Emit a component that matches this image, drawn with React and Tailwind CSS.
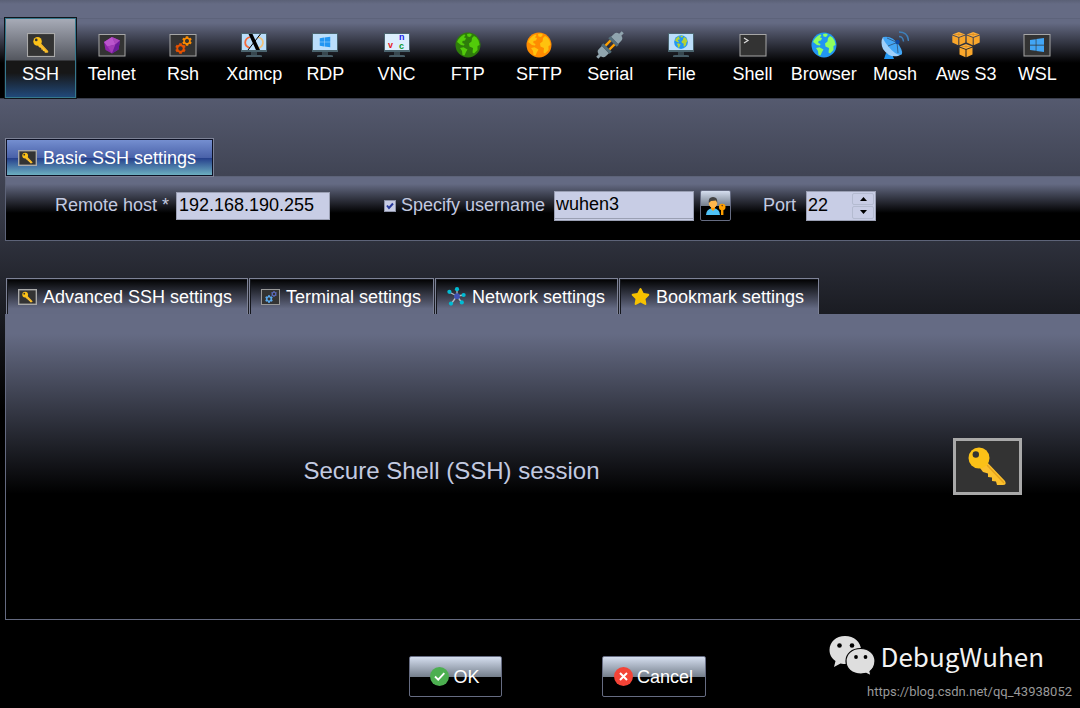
import React, { useState } from "react";
import { FaCog, FaStar, FaWindows } from "react-icons/fa";

const KeyShape = () => (
  <g>
    <path d="M33 23 L52 43 Q54 47 50 47 L44 47 L43 43.5 L39 43 L39 39.5 L35 39 L35 35.5 L30 34 L27 30 Z" fill="#fbc02d" />
    <path d="M34 27 L51 45" stroke="#e6a31c" strokeWidth="1.5" />
    <circle cx="26" cy="20" r="10.5" fill="#fbc117" />
    <circle cx="22.8" cy="16.5" r="3.2" fill="#333" />
  </g>
);

const KeyIcon = ({ className, thick = 5 }) => (
  <svg className={className} viewBox="0 0 69 57" preserveAspectRatio="none" aria-hidden="true">
    <rect x={thick / 2} y={thick / 2} width={69 - thick} height={57 - thick} fill="#333" stroke="#a9a9a9" strokeWidth={thick} />
    <KeyShape />
  </svg>
);

const Icon = ({ children }) => (
  <svg className="h-7 w-7" viewBox="0 0 28 28" aria-hidden="true">
    {children}
  </svg>
);

const Frame = () => <rect x="1" y="3.5" width="26" height="21.5" fill="#333" stroke="#a6a6a6" />;

const Monitor = ({ fill = "#bbdefb" }) => (
  <g>
    <rect x="11" y="20" width="6" height="4" fill="#37474f" />
    <path d="M6 26 V25 Q6 24 8 24 H20 Q22 24 22 25 V26 Z" fill="#455a64" />
    <rect x="1" y="2" width="26" height="19" fill="#4b646e" />
    <rect x="2" y="3" width="24" height="16" fill={fill} />
  </g>
);

const Globe = ({ sea, land }) => (
  <g>
    <circle cx="14" cy="14" r="12.5" fill={sea} />
    <path
      d="M3 11 Q5 6 10 3.4 L11.5 4 L10 6.5 L12 7 L11 9.5 L8.5 10 L8.3 12 L10.5 13 L10 14.5 L7 14 L4.5 12 Z
         M13 3 L16 2.4 L18 3.8 L16 6 L13.5 5.5 Z
         M18 7 L20 5 L22.5 6.5 L24.5 9.5 L25.6 14 L23.5 15 L23.5 19 L20 22.5 L18.5 21.5 L19 17 L15.5 15.5 L15 12.5 L17.5 10.5 Z
         M6 17 L9.5 16.2 L13.5 18.5 L12 21 L10.5 24.5 L8.5 24 L8 20 Z"
      fill={land}
    />
  </g>
);

const Gear = ({ x, y, size, color }) => <FaCog x={x} y={y} size={size} color={color} />;

const Cube = ({ x, y }) => (
  <g transform={`translate(${x} ${y})`}>
    <path d="M6.5 0 L13 2.5 L6.5 5 L0 2.5 Z" fill="#fbb040" />
    <path d="M0 3.5 L6 5.8 V13.2 L0 10.5 Z" fill="#f9a62b" />
    <path d="M13 3.5 L7 5.8 V13.2 L13 10.5 Z" fill="#f9a62b" />
    <path d="M2 2.5 H11 M6.5 0.6 V4.4" stroke="#e08e1d" strokeWidth="0.8" />
  </g>
);

const sessions = [
  { name: "SSH", icon: <KeyIcon className="my-[2px] h-6 w-7" thick={2.6} /> },
  {
    name: "Telnet",
    icon: (
      <Icon>
        <Frame />
        <path d="M14 6 L22 9.5 L20.5 18.5 L14 22.5 L7.5 19 L6 11 Z" fill="#8e24aa" />
        <path d="M14 6 L17.5 13.5 L22 9.5 Z" fill="#ab47bc" />
        <path d="M14 6 L6 11 L9.5 15.5 L17.5 13.5 Z" fill="#ba55cc" />
        <path d="M9.5 15.5 L17.5 13.5 L14 22.5 Z" fill="#a13bb5" />
        <path d="M17.5 13.5 L22 9.5 L20.5 18.5 L14 22.5 Z" fill="#6a1b9a" />
      </Icon>
    ),
  },
  {
    name: "Rsh",
    icon: (
      <Icon>
        <Frame />
        <Gear x={6} y={12} size={11} color="#e65100" />
        <Gear x={13} y={5} size={10} color="#fb8c00" />
        <circle cx="11.5" cy="17.5" r="2.2" fill="#333" />
        <circle cx="18" cy="10" r="2" fill="#333" />
      </Icon>
    ),
  },
  {
    name: "Xdmcp",
    icon: (
      <Icon>
        <Monitor />
        <path d="M10 17 A8 6 0 0 1 10 6" fill="none" stroke="#f4693a" strokeWidth="1.8" />
        <path d="M18 6 A8 6 0 0 1 16 17.5" fill="none" stroke="#f0c27b" strokeWidth="1.8" />
        <path d="M20.5 3 L8 19" stroke="#000" strokeWidth="1" />
        <path d="M8.5 3 H12.5 L20 19 H16 Z" fill="#000" />
      </Icon>
    ),
  },
  {
    name: "RDP",
    icon: (
      <Icon>
        <Monitor />
        <FaWindows x={8} y={5} size={12} color="#2196f3" />
      </Icon>
    ),
  },
  {
    name: "VNC",
    icon: (
      <Icon>
        <Monitor fill="#dceefd" />
        <g fontFamily="Liberation Sans, sans-serif" fontWeight="bold" fontSize="9">
          <text x="5" y="17" fill="#e51c23">v</text>
          <text x="16" y="9" fill="#1a1ae6">n</text>
          <text x="16" y="18" fill="#0a9a2c">c</text>
        </g>
      </Icon>
    ),
  },
  { name: "FTP", icon: <Icon><Globe sea="#2e7d0a" land="#52cc0a" /></Icon> },
  { name: "SFTP", icon: <Icon><Globe sea="#ff8c00" land="#ffc20e" /></Icon> },
  {
    name: "Serial",
    icon: (
      <Icon>
        <g transform="translate(14 14) rotate(45)">
          <rect x="-4" y="-5" width="2.4" height="10" fill="#ffa000" />
          <rect x="1.6" y="-5" width="2.4" height="10" fill="#ffa000" />
          <rect x="-6" y="-6.5" width="12" height="3" fill="#546e7a" />
          <path d="M-5 -6.5 V-11 Q-5 -14 -1.5 -14.5 V-18 H1.5 V-14.5 Q5 -14 5 -11 V-6.5 Z" fill="#90a4ae" />
          <rect x="-6" y="3.5" width="12" height="3" fill="#546e7a" />
          <path d="M-5 6.5 V11 Q-5 14 -1.5 14.5 V18 H1.5 V14.5 Q5 14 5 11 V6.5 Z" fill="#90a4ae" />
        </g>
      </Icon>
    ),
  },
  {
    name: "File",
    icon: (
      <Icon>
        <Monitor />
        <g transform="translate(6.3 3.3) scale(0.55)">
          <Globe sea="#2196f3" land="#b5d334" />
        </g>
      </Icon>
    ),
  },
  {
    name: "Shell",
    icon: (
      <Icon>
        <Frame />
        <path d="M5 7 L9 9.5 L5 12" fill="none" stroke="#ddd" strokeWidth="1.2" />
      </Icon>
    ),
  },
  { name: "Browser", icon: <Icon><Globe sea="#2196f3" land="#8fff60" /></Icon> },
  {
    name: "Mosh",
    icon: (
      <Icon>
        <path d="M5 22 L11 23 L13 28 H3 Z" fill="#2196f3" />
        <path d="M2 6 Q11 9 18 20 Q21 24 17 25 Q8 27 2 18 Q-1 11 2 6 Z" fill="#9fd0fb" />
        <path d="M2 6 Q11 4 18 14 Q23 22 20 24 Q14 24 7 15 Q2 9 2 6 Z" fill="#42a5f5" />
        <path d="M6 7 L16 11.5 L7 15 M16 11.5 L17 22" fill="none" stroke="#37618a" strokeWidth="1" />
        <circle cx="16.5" cy="11" r="2.2" fill="#0d47a1" />
        <path d="M18 5.5 Q22 5.5 22.5 10.5 M18 1 Q27 1 27.5 10" fill="none" stroke="#3e7fb8" strokeWidth="1.4" />
      </Icon>
    ),
  },
  {
    name: "Aws S3",
    icon: (
      <Icon>
        <Cube x={0.3} y={1} />
        <Cube x={14.7} y={1} />
        <Cube x={7.5} y={13} />
      </Icon>
    ),
  },
  {
    name: "WSL",
    icon: (
      <Icon>
        <Frame />
        <FaWindows x={6} y={6} size={16} color="#42a5f5" />
      </Icon>
    ),
  },
];

const SessionButton = ({ name, icon, active, onClick }) => (
  <button
    type="button"
    onClick={onClick}
    className={
      "flex flex-col items-center gap-[3px] border whitespace-nowrap pt-3 pb-[11px] text-lg leading-6 text-white " +
      (active
        ? "border-[#36788c] outline outline-1 outline-[#11151b] bg-[linear-gradient(#a7abb7_0px,#54575f_41px,#171717_42px,#171717_54px,#21497a_78px)]"
        : "border-transparent")
    }
  >
    {icon}
    <span>{name}</span>
  </button>
);

const TerminalIcon = () => (
  <svg className="h-4 w-[19px]" viewBox="0 0 19 16" aria-hidden="true">
    <rect x="0.5" y="0.5" width="18" height="15" fill="#333" stroke="#999" />
    <Gear x={4} y={6} size={8} color="#5aa9ee" />
    <Gear x={10} y={2} size={6} color="#5c6bc0" />
    <circle cx="8" cy="10" r="1.4" fill="#333" />
    <circle cx="13" cy="5" r="1.2" fill="#333" />
  </svg>
);

const NetworkIcon = () => (
  <svg className="h-[19px] w-[19px]" viewBox="0 0 19 19" aria-hidden="true">
    <path d="M10 9 L10 2 M10 9 L2 5 M10 9 L17 8 M10 9 L4 17 M10 9 L15 16" stroke="#b0bec5" strokeWidth="1.3" />
    <g fill="#00bcd4">
      <circle cx="10" cy="2.2" r="2.1" />
      <circle cx="2.4" cy="4.8" r="2.1" />
      <circle cx="16.6" cy="8" r="2.1" />
      <circle cx="4" cy="16.6" r="2.1" />
      <circle cx="14.8" cy="15.4" r="2.1" />
    </g>
    <circle cx="10" cy="9.2" r="2.9" fill="#3f51b5" />
  </svg>
);

const tabs = [
  { label: "Advanced SSH settings", width: "min-w-[242px]", icon: <KeyIcon className="h-4 w-[19px]" /> },
  { label: "Terminal settings", width: "min-w-[185px]", icon: <TerminalIcon /> },
  { label: "Network settings", width: "min-w-[183px]", icon: <NetworkIcon /> },
  { label: "Bookmark settings", width: "min-w-[200px]", icon: <FaStar className="h-[19px] w-[19px] text-[#f7c200]" /> },
];

const UserIcon = () => (
  <svg className="h-5 w-5" viewBox="0 0 20 20" aria-hidden="true">
    <path d="M0 19 Q0 13 7 12 Q14 13 14 19 Z" fill="#4fc3f7" />
    <path d="M5 11 H9 V13 L7 15 L5 13 Z" fill="#ff9800" />
    <ellipse cx="7" cy="7" rx="4.2" ry="5" fill="#ffb74d" />
    <path d="M2.8 7 Q2 1 7 1 Q12 1 11.2 7 L10 4.5 L5 5 Z" fill="#424242" />
    <circle cx="16.2" cy="11" r="3.3" fill="#ffa000" />
    <rect x="15" y="13" width="2.4" height="6" fill="#ffa000" />
    <circle cx="16.2" cy="9.6" r="0.8" fill="#5d4037" />
  </svg>
);

const glossy =
  "border border-[#666c82] rounded-xs bg-[linear-gradient(#d5deef_0%,#76808d_50%,#000_52%)]";

const ActionButton = ({ children, width }) => (
  <button
    type="button"
    className={"flex h-[41px] items-center justify-center gap-1 text-lg leading-6 text-white " + glossy + " " + width}
  >
    {children}
  </button>
);

const Watermark = () => (
  <div className="absolute right-2 bottom-1 flex flex-col items-end">
    <div className="mr-7 flex items-center gap-[6px]">
      <svg className="h-10 w-[46px]" viewBox="0 0 46 40" aria-hidden="true">
        <path d="M16 0 C7 0 0.5 6 0.5 14 C0.5 19 3 22.5 6.5 25 L5 31 L11.5 27.5 Q14 28 18 28 C26 28 32 22 32 14 C32 6 25 0 16 0 Z" fill="#dedede" />
        <path d="M31.5 12.5 C23 12.5 17 18 17 25 C17 33 23 38 32 38 L37 37.3 L42 39.8 L41 35.5 C44 33 46 29 46 25 C46 18 40 12.5 31.5 12.5 Z" fill="#dedede" stroke="#000" strokeWidth="1.2" />
        <g fill="#000">
          <circle cx="10.5" cy="9.5" r="2.3" />
          <circle cx="23" cy="9.5" r="2.3" />
          <circle cx="27" cy="21" r="1.9" />
          <circle cx="36.5" cy="21" r="1.9" />
        </g>
      </svg>
      <span className="font-['Noto_Sans_CJK_SC',sans-serif] text-[26px] leading-9 text-[#f2f2f2]">DebugWuhen</span>
    </div>
    <span className="font-[Roboto,sans-serif] mt-1 text-[13px] leading-6 text-[#999]">
      https://blog.csdn.net/qq_43938052
    </span>
  </div>
);

const App = () => {
  const [session, setSession] = useState("SSH");
  const [host, setHost] = useState("192.168.190.255");
  const [useName, setUseName] = useState(true);
  const [username, setUsername] = useState("wuhen3");
  const [port, setPort] = useState(22);

  return (
    <div className="relative min-h-screen overflow-x-hidden bg-black bg-[linear-gradient(#5a6076_0px,#656b84_4px,#656b84_40px,#000_410px)] pt-[18px] pb-[11px] font-['Liberation_Sans',Arial,sans-serif] text-lg leading-6 text-[#c3cae0]">
      <nav className="grid grid-cols-15 border-b border-[#3a3e4c] bg-[linear-gradient(#565c72_0px,#646a83_1px,#646a83_5px,#000_45px)] pr-[7px] pl-[5px]">
        {sessions.map((s) => (
          <SessionButton
            key={s.name}
            name={s.name}
            icon={s.icon}
            active={session === s.name}
            onClick={() => setSession(s.name)}
          />
        ))}
      </nav>

      <section className="mt-[39px] ml-[5px]">
        <button
          type="button"
          className="relative -mb-px flex h-[39px] min-w-[209px] items-center gap-[6px] border border-[#7d8296] bg-[linear-gradient(#7791d2_0%,#4a62a9_50%,#26408c_52%,#70b5c3_100%)] px-3 text-white shadow-[inset_0_0_0_1px_#0c1024]"
        >
          <KeyIcon className="h-4 w-[19px]" />
          Basic SSH settings
        </button>
        <div className="flex items-center border-y border-l border-[#5d6378] bg-[linear-gradient(#646a83_0px,#646a83_7px,#000_36px)] pt-[13px] pb-[19px] pl-[49px]">
          <div className="flex items-center gap-1">
            <label htmlFor="host" className="min-w-[117px] pb-[2px] whitespace-nowrap">Remote host *</label>
            <input
              id="host"
              value={host}
              onChange={(e) => setHost(e.target.value)}
              className="h-7 w-[154px] border border-[#9a9fb3] bg-[#c8cde5] px-[2px] text-black outline-none"
            />
          </div>
          <div className="ml-[54px] flex items-center gap-[6px]">
            <label className="flex items-center gap-[5px] whitespace-nowrap">
              <span className="relative h-3 w-3">
                <input
                  type="checkbox"
                  checked={useName}
                  onChange={(e) => setUseName(e.target.checked)}
                  className="block h-3 w-3 appearance-none border border-[#8e93a8] bg-[#c8cde5]"
                />
                {useName && (
                  <svg className="pointer-events-none absolute inset-0 h-3 w-3" viewBox="0 0 12 12">
                    <path d="M3 5.5 L5 8 L9 3.5" fill="none" stroke="#26389a" strokeWidth="2" />
                  </svg>
                )}
              </span>
              <span className="min-w-[147px] pb-[2px]">Specify username</span>
            </label>
            <input
              aria-label="Username"
              value={username}
              onChange={(e) => setUsername(e.target.value)}
              className="h-[30px] w-[140px] border border-[#9a9fb3] bg-[#c8cde5] px-px pb-[2px] text-black shadow-[inset_0_-1px_0_#c8cde5,inset_0_-2px_0_#9a9fb3] outline-none"
            />
            <button type="button" aria-label="Manage users" className={"flex h-[31px] w-[31px] items-center justify-center " + glossy}>
              <UserIcon />
            </button>
          </div>
          <div className="ml-8 flex items-center gap-2">
            <label htmlFor="port" className="min-w-[35px] pb-[2px]">Port</label>
            <div className="flex h-[30px] w-[70px] border border-[#9a9fb3] bg-[#c8cde5]">
              <input
                id="port"
                value={port}
                onChange={(e) => setPort(Number(e.target.value) || 0)}
                className="w-11 bg-transparent px-px pb-[2px] text-black outline-none"
              />
              <div className="flex flex-1 flex-col gap-px p-px">
                <button
                  type="button"
                  aria-label="Increase port"
                  onClick={() => setPort(port + 1)}
                  className="flex flex-1 items-center justify-center rounded-xs border border-[#b4bbd0]"
                >
                  <svg className="h-1 w-[7px]" viewBox="0 0 7 4"><path d="M0 4 L3.5 0 L7 4 Z" /></svg>
                </button>
                <button
                  type="button"
                  aria-label="Decrease port"
                  onClick={() => setPort(port - 1)}
                  className="flex flex-1 items-center justify-center rounded-xs border border-[#b4bbd0]"
                >
                  <svg className="h-1 w-[7px]" viewBox="0 0 7 4"><path d="M0 0 L3.5 4 L7 0 Z" /></svg>
                </button>
              </div>
            </div>
          </div>
        </div>
      </section>

      <section className="mt-[37px] ml-[5px]">
        <div className="flex gap-px pl-px">
          {tabs.map((t) => (
            <button
              key={t.label}
              type="button"
              className={
                "flex h-9 items-center gap-[6px] whitespace-nowrap border-x border-t border-[#7d8296] bg-[linear-gradient(#000_0%,#0c0d10_10%,#646a83_85%)] px-[11px] text-white shadow-[inset_1px_1px_0_#14161c] " +
                t.width
              }
            >
              {t.icon}
              {t.label}
            </button>
          ))}
        </div>
        <div className="flex items-center border-b border-l border-[#646a80] bg-[linear-gradient(#656b84_0px,#656b84_20px,#000_180px)] py-[124px] pr-[58px]">
          <h1 className="flex-1 pt-2 pr-14 text-center text-2xl">Secure Shell (SSH) session</h1>
          <KeyIcon className="h-[57px] w-[69px]" thick={3} />
        </div>
      </section>

      <footer className="mt-9 flex justify-center gap-[100px] pl-[34px]">
        <ActionButton width="w-[93px]">
          <svg className="h-[19px] w-[19px]" viewBox="0 0 19 19" aria-hidden="true">
            <circle cx="9.5" cy="9.5" r="9.5" fill="#4caf50" />
            <path d="M5 9.5 L8.2 12.7 L14.3 6.2" fill="none" stroke="#fff" strokeWidth="1.8" />
          </svg>
          OK
        </ActionButton>
        <ActionButton width="w-[104px]">
          <svg className="h-[19px] w-[19px]" viewBox="0 0 19 19" aria-hidden="true">
            <circle cx="9.5" cy="9.5" r="9.5" fill="#f44336" />
            <path d="M6 6 L13 13 M13 6 L6 13" stroke="#fff" strokeWidth="2" />
          </svg>
          Cancel
        </ActionButton>
      </footer>

      <Watermark />
    </div>
  );
};

export default App;
